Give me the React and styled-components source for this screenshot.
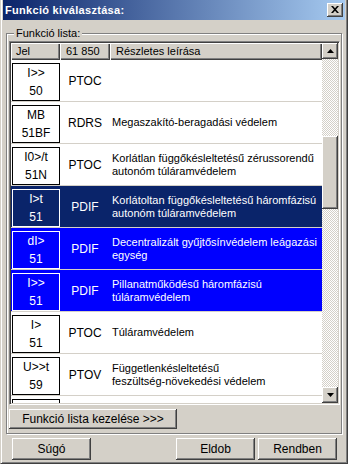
import React from 'react'
import styled, { createGlobalStyle } from 'styled-components'

const GlobalStyle = createGlobalStyle`
  html, body {
    margin: 0;
    padding: 0;
    background: #d4d0c8;
  }
  body {
    font-family: "Liberation Sans", Arial, sans-serif;
    font-size: 11px;
    color: #000;
  }
`

// last row is cut by the list edge, only its box top shows
const rows = [
  { top: 'I>>', bottom: '50', code: 'PTOC', desc: [] },
  { top: 'MB', bottom: '51BF', code: 'RDRS', desc: ['Megaszakító-beragadási védelem'] },
  { top: 'I0>/t', bottom: '51N', code: 'PTOC', desc: ['Korlátlan függőkésleltetésű zérussorendű', 'autonóm túláramvédelem'] },
  { top: 'I>t', bottom: '51', code: 'PDIF', desc: ['Korlátoltan függőkésleltetésű háromfázisú', 'autonóm túláramvédelem'], sel: 'focus' },
  { top: 'dI>', bottom: '51', code: 'PDIF', desc: ['Decentralizált gyűjtősínvédelem leágazási', 'egység'], sel: 'on' },
  { top: 'I>>', bottom: '51', code: 'PDIF', desc: ['Pillanatműködésű háromfázisú', 'túláramvédelem'], sel: 'on' },
  { top: 'I>', bottom: '51', code: 'PTOC', desc: ['Túláramvédelem'] },
  { top: 'U>>t', bottom: '59', code: 'PTOV', desc: ['Függetlenkésleltetésű', 'feszültség-növekedési védelem'] },
  { top: '', bottom: '', code: '', desc: [] },
]

const selBg = { focus: '#0a246a', on: '#0000ff' }

const Window = styled.div`
  width: 348px;
  height: 464px;
  box-sizing: border-box;
  background: #d4d0c8;
  border-left: 1px solid #d4d0c8;
  border-right: 1px solid #404040;
  border-bottom: 1px solid #404040;
  box-shadow: inset 1px 0 #fff, inset -1px -1px #808080;
  padding: 0 2px 2px 2px;
  display: flex;
  flex-direction: column;
  overflow: hidden;
`

const TitleBar = styled.div`
  height: 20px;
  flex: none;
  display: flex;
  align-items: center;
  justify-content: space-between;
  padding: 0 2px 0 2px;
  background: linear-gradient(90deg, #0a246a, #a6caf0);
  color: #fff;
  font-weight: bold;
  letter-spacing: 0.3px;
`

const CloseBtn = styled.div`
  width: 16px;
  height: 14px;
  box-sizing: border-box;
  background: #d4d0c8;
  box-shadow: inset -1px -1px #404040, inset 1px 1px #fff, inset -2px -2px #808080;
  display: flex;
  align-items: center;
  justify-content: center;
  padding: 0 1px 1px 0;
`

const Body = styled.div`
  flex: 1;
  display: flex;
  flex-direction: column;
  padding: 13px 3px 0 3px;
`

const Group = styled.div`
  position: relative;
  height: 401px;
  flex: none;
  box-sizing: border-box;
  border: 1px solid #808080;
  box-shadow: inset 1px 1px #fff, 1px 1px #fff;
  padding: 7px 1px 4px 2px;
  display: flex;
  flex-direction: column;
  gap: 4px;
`

const Legend = styled.span`
  position: absolute;
  top: -7px;
  left: 7px;
  padding: 0 2px;
  background: #d4d0c8;
  line-height: 13px;
`

const ListView = styled.div`
  height: 364px;
  flex: none;
  box-sizing: border-box;
  border: 1px solid;
  border-color: #808080 #fff #fff #808080;
  box-shadow: inset 1px 1px #404040, inset -1px -1px #d4d0c8;
  padding: 1px;
  display: grid;
  grid-template-columns: 1fr 16px;
  grid-template-rows: 100%;
  background: #fff;
  overflow: hidden;
`

const Content = styled.div`
  overflow: hidden;
  display: flex;
  flex-direction: column;
`

const Header = styled.div`
  display: grid;
  grid-template-columns: 49px 50px 1fr;
  height: 17px;
  flex: none;
`

const HeadCell = styled.div`
  background: #d4d0c8;
  box-shadow: inset 1px 1px #fff, inset -1px -1px #404040, inset -2px -2px #808080;
  padding-left: ${p => p.$pad}px;
  line-height: 17px;
  white-space: nowrap;
`

const Row = styled.div`
  display: grid;
  grid-template-columns: 49px 50px 1fr;
  height: 41px;
  flex: none;
  border-bottom: 1px solid #d4d0c8;
  background: ${p => (p.$sel ? selBg[p.$sel] : '#fff')};
  color: ${p => (p.$sel ? '#fff' : '#000')};
`

const SymbolBox = styled.div`
  margin: 3px 0 0 1px;
  width: 48px;
  height: 38px;
  box-sizing: border-box;
  border: 1px solid ${p => (p.$sel ? '#fff' : '#000')};
  display: flex;
  flex-direction: column;
  align-items: center;
`

const SymText = styled.div`
  height: 18px;
  line-height: 18px;
  font-size: 12px;
`

const FracLine = styled.div`
  width: 30px;
  height: 1px;
  background: currentColor;
`

const Code = styled.div`
  align-self: center;
  text-align: center;
  font-size: 12px;
`

const Desc = styled.div`
  align-self: center;
  padding-left: 2px;
  line-height: 13px;
  font-size: 11px;
  white-space: nowrap;
  overflow: hidden;
`

const ScrollBar = styled.div`
  display: grid;
  grid-template-rows: 16px 1fr 16px;
  background: repeating-conic-gradient(#d4d0c8 0 25%, #fff 0 50%) 0 0 / 2px 2px;
`

const ArrowBtn = styled.div`
  background: #d4d0c8;
  box-shadow: inset -1px -1px #404040, inset 1px 1px #fff, inset -2px -2px #808080, inset 2px 2px #d4d0c8;
  display: flex;
  align-items: center;
  justify-content: center;
`

const Track = styled.div`
  padding-top: 77px;
`

const Thumb = styled.div`
  height: 73px;
  background: #d4d0c8;
  box-shadow: inset -1px -1px #404040, inset 1px 1px #fff, inset -2px -2px #808080;
`

const Button = styled.button`
  width: ${p => p.$w}px;
  height: ${p => p.$h}px;
  flex: none;
  border: none;
  padding: 0;
  margin: 0;
  background: #d4d0c8;
  box-shadow: inset -1px -1px #404040, inset 1px 1px #fff, inset -2px -2px #808080;
  font-family: "Liberation Sans", Arial, sans-serif;
  font-size: 12px;
  color: #000;
`

const Footer = styled.div`
  display: flex;
  padding: 4px 5px 0 6px;
  gap: 3px;
  & > :first-child {
    margin-right: auto;
  }
`

const Arrow = ({ down }) => (
  <svg width="7" height="4" viewBox="0 0 7 4">
    <path d={down ? 'M0 0h7L3.5 4z' : 'M0 4h7L3.5 0z'} fill="#000" />
  </svg>
)

export default function App() {
  return (
    <>
      <GlobalStyle />
      <Window>
        <TitleBar>
          <span>Funkció kiválasztása:</span>
          <CloseBtn>
            <svg width="8" height="7" viewBox="0 0 8 7">
              <path d="M0 0h2l2 2.2L6 0h2L5 3.5 8 7H6L4 4.8 2 7H0l3-3.5z" fill="#000" />
            </svg>
          </CloseBtn>
        </TitleBar>
        <Body>
          <Group>
            <Legend>Funkció lista:</Legend>
            <ListView>
              <Content>
                <Header>
                  <HeadCell $pad={5}>Jel</HeadCell>
                  <HeadCell $pad={6}>61 850</HeadCell>
                  <HeadCell $pad={6}>Részletes leírása</HeadCell>
                </Header>
                {rows.map((r, i) => (
                  <Row key={i} $sel={r.sel}>
                    <SymbolBox $sel={r.sel}>
                      <SymText>{r.top}</SymText>
                      <FracLine />
                      <SymText>{r.bottom}</SymText>
                    </SymbolBox>
                    <Code>{r.code}</Code>
                    <Desc>
                      {r.desc.map((l, j) => (
                        <div key={j}>{l}</div>
                      ))}
                    </Desc>
                  </Row>
                ))}
              </Content>
              <ScrollBar>
                <ArrowBtn><Arrow /></ArrowBtn>
                <Track><Thumb /></Track>
                <ArrowBtn><Arrow down /></ArrowBtn>
              </ScrollBar>
            </ListView>
            <Button $w={168} $h={20}>Funkció lista kezelése &gt;&gt;&gt;</Button>
          </Group>
          <Footer>
            <Button $w={79} $h={22}>Súgó</Button>
            <Button $w={79} $h={22}>Eldob</Button>
            <Button $w={79} $h={22}>Rendben</Button>
          </Footer>
        </Body>
      </Window>
    </>
  )
}
